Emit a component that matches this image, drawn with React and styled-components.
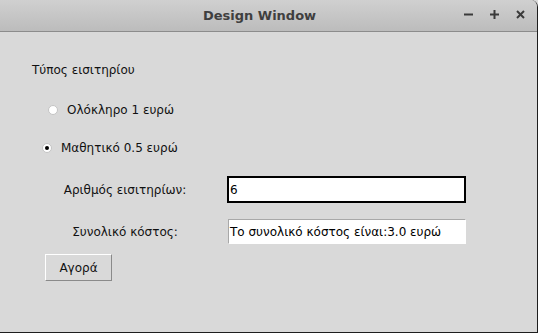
import React from "react";
import styled, { createGlobalStyle } from "styled-components";

const Global = createGlobalStyle`
  html, body {
    margin: 0;
    padding: 0;
    background: #d9d9d9;
  }
  * {
    box-sizing: border-box;
  }
`;

const Window = styled.div`
  width: 538px;
  height: 333px;
  display: flex;
  flex-direction: column;
  background: #d9d9d9;
  border-right: 1px solid #1e1e1e;
  border-bottom: 1px solid #1e1e1e;
  border-top-right-radius: 7px;
  overflow: hidden;
  font-family: "DejaVu Sans", sans-serif;
`;

const TitleBar = styled.div`
  height: 32px;
  flex: none;
  display: flex;
  align-items: center;
  position: relative;
  background: linear-gradient(#d0d0d0, #bcbcbc);
  border-bottom: 1px solid #8c8c8c;
`;

const Title = styled.div`
  flex: 1;
  text-align: center;
  padding-right: 18px;
  font-size: 13px;
  font-weight: bold;
  color: #3f3f3f;
`;

const Controls = styled.div`
  position: absolute;
  right: 12px;
  top: 10px;
  display: flex;
  gap: 17px;
`;

const Content = styled.div`
  flex: 1;
  display: flex;
  flex-direction: column;
  align-items: flex-start;
`;

const Heading = styled.div`
  margin: 30px 0 0 32px;
  height: 16px;
  line-height: 16px;
  font-size: 12px;
  color: #111;
`;

const RadioRow = styled.label`
  margin: ${(p) => p.$top}px 0 0 ${(p) => p.$left}px;
  height: 16px;
  display: flex;
  align-items: center;
  gap: ${(p) => p.$gap}px;
  font-size: 12px;
  color: #111;
`;

const RadioDot = styled.span`
  width: 10px;
  height: 10px;
  border-radius: 50%;
  background: #fff;
  border: 1px solid #c4c4c4;
  display: flex;
  align-items: center;
  justify-content: center;
  &::after {
    content: "";
    width: 4px;
    height: 4px;
    border-radius: 50%;
    background: ${(p) => (p.$checked ? "#000" : "transparent")};
  }
`;

const Form = styled.div`
  margin: 20px 0 0 45px;
  display: grid;
  grid-template-columns: 160px 240px;
  column-gap: 22px;
  row-gap: 16px;
  align-items: center;
`;

const FieldLabel = styled.div`
  text-align: center;
  font-size: 12px;
  color: #111;
`;

const Entry = styled.div`
  height: ${(p) => (p.$focus ? 27 : 25)}px;
  width: ${(p) => (p.$focus ? 239 : 238)}px;
  margin-left: ${(p) => (p.$focus ? 0 : 1)}px;
  background: #fff;
  border: ${(p) => (p.$focus ? "2px solid #000" : "1px solid #a8a8a8")};
  border-right-color: ${(p) => (p.$focus ? "#000" : "#fff")};
  border-bottom-color: ${(p) => (p.$focus ? "#000" : "#fff")};
  display: flex;
  align-items: center;
  padding-left: ${(p) => (p.$focus ? 1 : 1)}px;
  font-size: 12px;
  color: #000;
`;

const Button = styled.button`
  margin: 10px 0 0 45px;
  width: 67px;
  height: 27px;
  background: #d9d9d9;
  border: 1px solid #fff;
  border-right-color: #8a8a8a;
  border-bottom-color: #8a8a8a;
  font-family: "DejaVu Sans", sans-serif;
  font-size: 12px;
  color: #111;
  padding: 0;
`;

const Icon = ({ children }) => (
  <svg width="9" height="9" viewBox="0 0 9 9" stroke="#3a3a3a" strokeWidth="2">
    {children}
  </svg>
);

export default function App() {
  return (
    <>
      <Global />
      <Window>
        <TitleBar>
          <Title>Design Window</Title>
          <Controls>
            <Icon>
              <line x1="0" y1="4.5" x2="9" y2="4.5" />
            </Icon>
            <Icon>
              <line x1="0" y1="4.5" x2="9" y2="4.5" />
              <line x1="4.5" y1="0" x2="4.5" y2="9" />
            </Icon>
            <Icon>
              <line x1="1" y1="1" x2="8" y2="8" />
              <line x1="8" y1="1" x2="1" y2="8" />
            </Icon>
          </Controls>
        </TitleBar>
        <Content>
          <Heading>Τύπος εισιτηρίου</Heading>
          <RadioRow $top={24} $left={48} $gap={9}>
            <RadioDot />
            Ολόκληρο 1 ευρώ
          </RadioRow>
          <RadioRow $top={22} $left={42} $gap={9}>
            <RadioDot $checked />
            Μαθητικό 0.5 ευρώ
          </RadioRow>
          <Form>
            <FieldLabel>Αριθμός εισιτηρίων:</FieldLabel>
            <Entry $focus>6</Entry>
            <FieldLabel>Συνολικό κόστος:</FieldLabel>
            <Entry>Το συνολικό κόστος είναι:3.0 ευρώ</Entry>
          </Form>
          <Button>Αγορά</Button>
        </Content>
      </Window>
    </>
  );
}
